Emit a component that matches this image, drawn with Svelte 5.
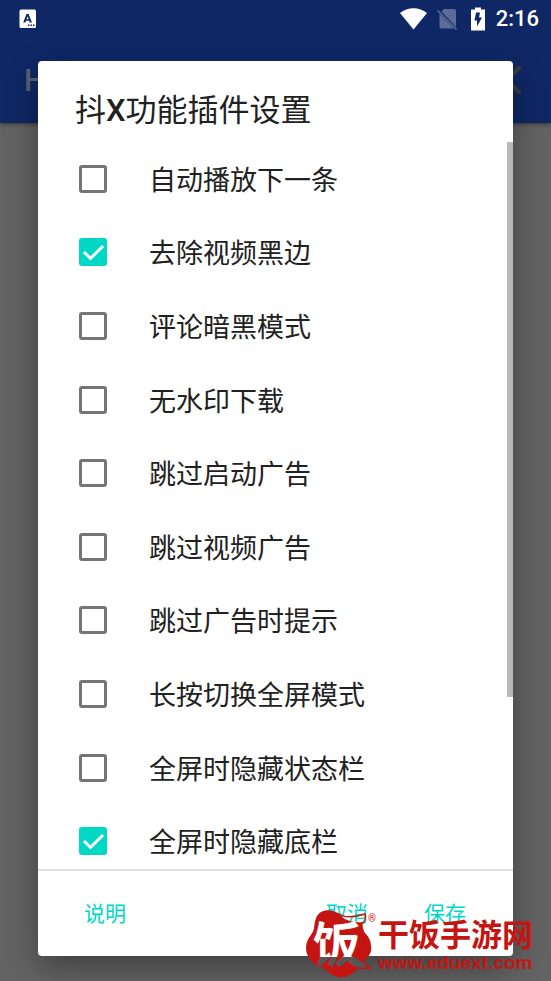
<script lang="ts">
    let options = $state([
        { label: "自动播放下一条", on: false },
        { label: "去除视频黑边", on: true },
        { label: "评论暗黑模式", on: false },
        { label: "无水印下载", on: false },
        { label: "跳过启动广告", on: false },
        { label: "跳过视频广告", on: false },
        { label: "跳过广告时提示", on: false },
        { label: "长按切换全屏模式", on: false },
        { label: "全屏时隐藏状态栏", on: false },
        { label: "全屏时隐藏底栏", on: true },
    ]);
</script>

<div class="screen">
    <header>
        <div class="status">
            <svg width="18" height="20" viewBox="0 0 18 20">
                <rect x="0.500" y="0.500" width="16.500" height="18.500" rx="1.500" fill="#fff" />
                <path d="M4.200 13.500 7.500 5h2.100l3.300 8.500h-2.200l-.6-1.700H7l-.6 1.700zM7.600 10.200h2L8.600 7.200z" fill="#0f2765" />
                <path d="M9 15.500h1.500V17H9zM11.500 15.500H13V17h-1.500zM14 15.500h1.500V17H14z" fill="#0f2765" />
            </svg>
            <div class="tray">
                <svg width="28" height="24" viewBox="0 0 28 24">
                    <path d="M1 6C8.500 -0.500 20.500 -0.500 28 6L14.500 22.500z" fill="#fff" />
                </svg>
                <svg width="26" height="24" viewBox="0 0 26 24">
                    <path d="M8 2h10q2 0 2 2v16L5.500 4.500zM3.500 7 18 21.500H5q-1.500 0-1.500-1.500z" fill="#5c6b98" />
                    <path d="M1.500 3.500 20.500 22.500" stroke="#5c6b98" stroke-width="1.600" />
                </svg>
                <svg width="14" height="24" viewBox="0 0 14 24">
                    <path d="M4 0.500h6v2h4v21H0v-21h4z" fill="#fff" />
                    <path d="M9 5.500H5L3.500 13.500H6V19.500L11 10.500H8z" fill="#0f2765" />
                </svg>
                <span class="clock">2:16</span>
            </div>
        </div>
        <div class="appbar">
            <h1>H</h1>
            <svg width="28" height="28" viewBox="0 0 28 28">
                <path d="M2 2l24 24M26 2 2 26" stroke="#393d49" stroke-width="4" stroke-linecap="round" />
            </svg>
        </div>
    </header>

    <div class="overlay">
        <div class="dialog" role="dialog" aria-labelledby="title">
            <h2 id="title">抖<b>X</b>功能插件设置</h2>
            <div class="body">
                <ul>
                    {#each options as option}
                        <li>
                            <label>
                                <input type="checkbox" bind:checked={option.on} />
                                <svg class="tick" viewBox="0 0 28 28">
                                    <path d="M5 14l6.500 6.500L24 8" fill="none" stroke="#fff" stroke-width="3" />
                                </svg>
                                <span>{option.label}</span>
                            </label>
                        </li>
                    {/each}
                </ul>
                <div class="thumb"></div>
            </div>
            <footer>
                <button>说明</button>
                <button class="cancel">取消</button>
                <button>保存</button>
            </footer>
        </div>
    </div>

    <a class="brand" href="http://www.eduext.com">
        <svg width="72" height="72" viewBox="0 0 72 72">
            <defs>
                <linearGradient id="split" gradientUnits="userSpaceOnUse" x1="0" y1="0" x2="0" y2="72">
                    <stop offset="0.660" stop-color="#fff" />
                    <stop offset="0.660" stop-color="#565656" />
                </linearGradient>
            </defs>
            <path
                d="M19 3C25 0 32 1 37 5C42 11 50 14 61 13C60 17 61 21 63 24C67 28 69 32 69 37C70 42 68 46 64 50L61 52L71 60H55C50 66 44 69 36 68C29 67 26 62 21 59C11 56 4 48 4 39C4 29 11 26 12 19C13 11 14 6 19 3Z"
                fill="#c41512"
            />
            <path d="M35 4C42 9 51 9 63 5C64 9 63 12 61 14" fill="none" stroke="#c41512" stroke-width="1.500" />
            <path d="M47 48h6L66 58.500H56z" fill="#565656" />
            <text x="11" y="53" fill="url(#split)">饭</text>
        </svg>
        <sup>®</sup>
        <span class="words">
            <strong>干饭手游网</strong>
            <small>www.eduext.com</small>
        </span>
    </a>
</div>

<style>
    :global(body) {
        background: #636363;
        font-family: Roboto, "Noto Sans CJK SC", sans-serif;
    }
    .screen {
        position: relative;
        min-height: 100vh;
        overflow: hidden;
    }
    header {
        background: #0f2765;
        box-shadow: 0 1px 4px #333;
    }
    .status {
        display: flex;
        justify-content: space-between;
        align-items: center;
        height: 37px;
        padding: 0 12px 0 19px;
    }
    .tray {
        display: flex;
        align-items: center;
        gap: 9px;
    }
    .clock {
        padding-left: 2px;
        color: #fff;
        font-size: 22px;
        line-height: 24px;
        font-weight: 500;
    }
    .appbar {
        display: flex;
        justify-content: space-between;
        align-items: center;
        height: 86px;
        padding: 0 30px 0 24px;
    }
    h1 {
        margin: 0;
        color: #596178;
        font-size: 31px;
        font-weight: 500;
    }
    .overlay {
        position: absolute;
        inset: 0;
        display: flex;
        padding: 61px 38px 25px;
    }
    .dialog {
        flex: 1;
        display: flex;
        flex-direction: column;
        min-width: 0;
        border-radius: 4px;
        background: #fff;
        color: #212121;
        box-shadow: 0 12px 32px rgba(0, 0, 0, 0.35);
        overflow: hidden;
    }
    h2 {
        margin: 0;
        padding: 28px 37px 9px;
        font-size: 31px;
        line-height: 44px;
        font-weight: 400;
    }
    b {
        font-weight: 500;
    }
    .body {
        position: relative;
        flex: 1;
        min-height: 0;
        overflow: hidden;
    }
    ul {
        display: grid;
        grid-auto-rows: 1fr;
        height: 736px;
        margin: 0;
        padding: 0;
        list-style: none;
    }
    label {
        position: relative;
        display: flex;
        align-items: center;
        gap: 42px;
        height: 100%;
        padding: 0 41px;
        font-size: 27px;
        line-height: 40px;
        white-space: nowrap;
    }
    label span {
        padding-top: 4px;
    }
    input {
        appearance: none;
        flex: none;
        width: 28px;
        height: 28px;
        margin: 0;
        border: 3px solid #757575;
        border-radius: 3px;
    }
    input:checked {
        border-color: #00d8c6;
        background: #00d8c6;
    }
    .tick {
        display: none;
        flex: none;
        width: 28px;
        height: 28px;
        margin-left: -70px;
        pointer-events: none;
    }
    input:checked + .tick {
        display: block;
    }
    .thumb {
        position: absolute;
        top: 0;
        right: 0;
        width: 6px;
        height: 76.4%;
        background: #b9b9b9;
    }
    footer {
        display: flex;
        align-items: center;
        height: 85px;
        padding: 0 30px 0 29px;
        border-top: 2px solid #dedede;
    }
    button {
        padding: 8px 17px;
        border: 0;
        background: none;
        color: #00d8c6;
        font: inherit;
        font-size: 21px;
        line-height: 32px;
    }
    .cancel {
        margin-left: auto;
        margin-right: 22px;
    }
    .brand {
        position: absolute;
        right: 18px;
        bottom: 0;
        display: flex;
        color: #c41512;
        text-decoration: none;
    }
    .brand text {
        font: 700 48px "Noto Sans CJK SC", sans-serif;
    }
    sup {
        width: 10px;
        margin: 4px 0 0 -6px;
        font-size: 10px;
        line-height: 12px;
    }
    .words {
        display: flex;
        flex-direction: column;
        padding-top: 9px;
    }
    strong {
        font-size: 31px;
        line-height: 36px;
        font-weight: 700;
    }
    small {
        font: 700 19px/18px "Liberation Sans", sans-serif;
    }
</style>
